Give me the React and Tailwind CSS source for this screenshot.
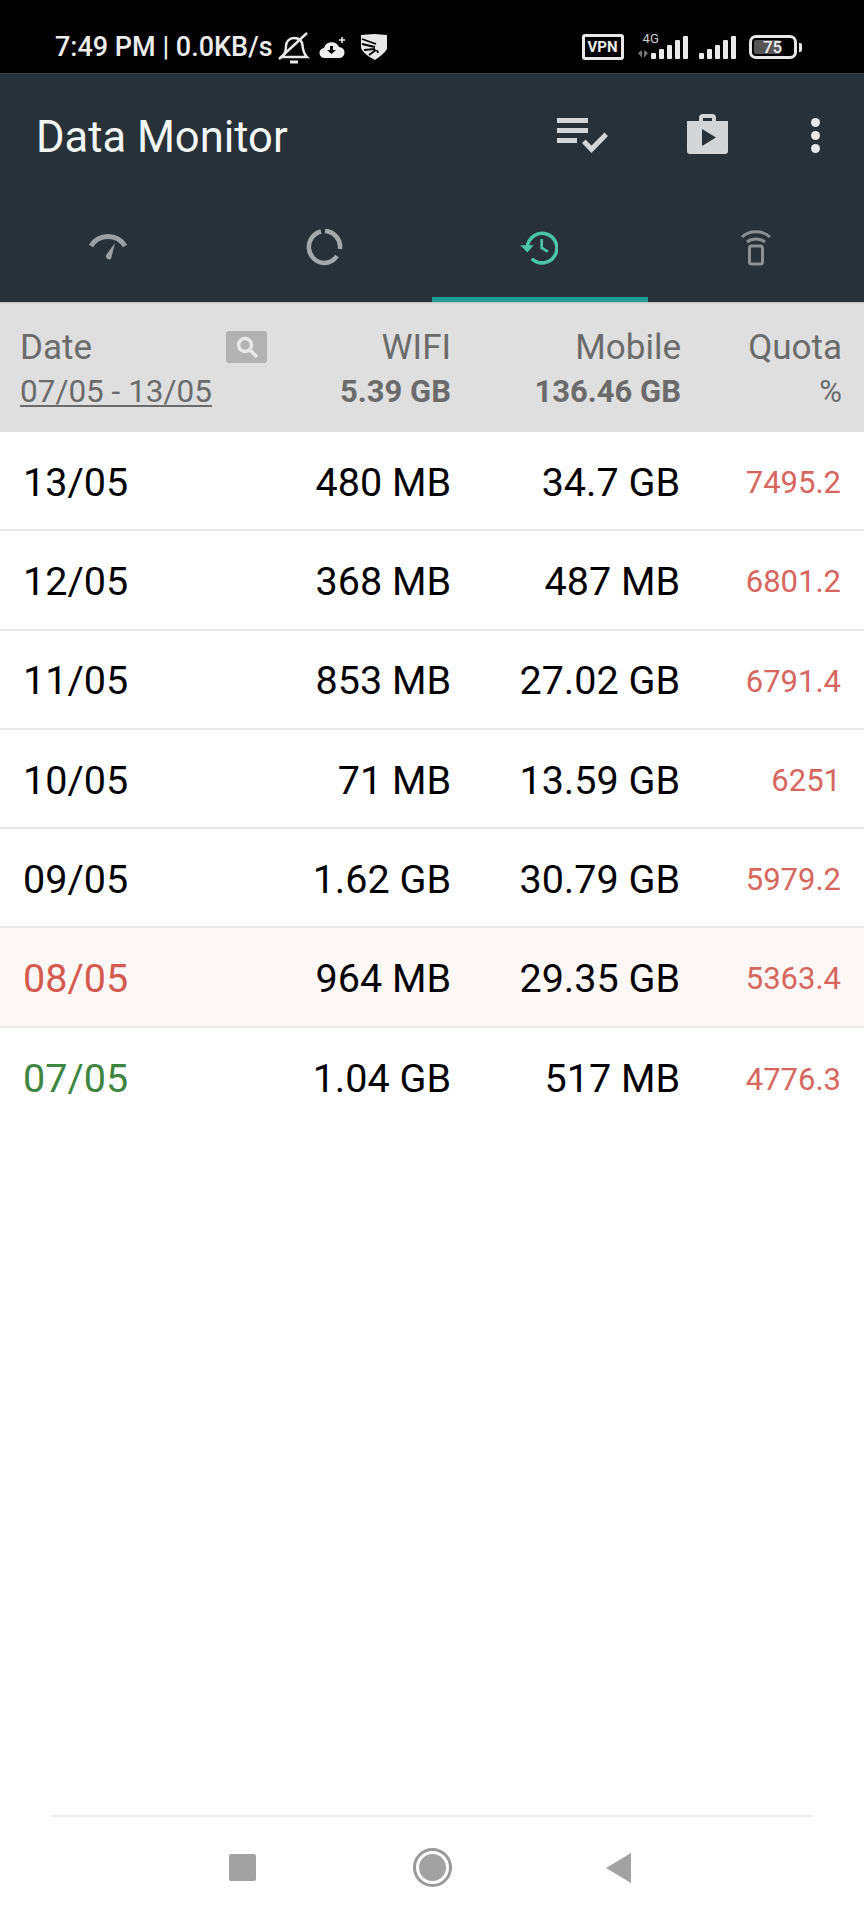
import React from 'react';

const rows = [
  { date: '13/05', wifi: '480 MB', mobile: '34.7 GB', quota: '7495.2', line: true },
  { date: '12/05', wifi: '368 MB', mobile: '487 MB', quota: '6801.2', line: true },
  { date: '11/05', wifi: '853 MB', mobile: '27.02 GB', quota: '6791.4', line: true },
  { date: '10/05', wifi: '71 MB', mobile: '13.59 GB', quota: '6251', line: true },
  { date: '09/05', wifi: '1.62 GB', mobile: '30.79 GB', quota: '5979.2', line: true },
  { date: '08/05', wifi: '964 MB', mobile: '29.35 GB', quota: '5363.4', line: true, rowClass: 'bg-[#fdf7f6]', dateClass: 'text-[#d4594e]' },
  { date: '07/05', wifi: '1.04 GB', mobile: '517 MB', quota: '4776.3', dateClass: 'text-[#3d8540]' },
];

function BellOff() {
  return (
    <svg width="32" height="32" viewBox="0 0 32 32" fill="none" stroke="#e8e8e8" strokeWidth="2.4">
      <path d="M4 25c3-3 4-6 4-11 0-4 3-8 8-8s8 3 8.500 7.500c.5 4.500 1 8 4.500 11.500z" />
      <path d="M12 30h8" strokeWidth="3" />
      <path d="M1 27L29 1" />
    </svg>
  );
}

function CloudDown() {
  return (
    <svg width="28" height="24" viewBox="0 0 28 24">
      <path d="M6 22a5 5 0 0 1-1-10 8 8 0 0 1 15-1 5.500 5.500 0 0 1 0 11z" fill="#eee" />
      <path d="M11 10h3v4h3l-4.500 4L8 14h3z" fill="#000" />
      <path d="M23 1v6M20 4h6" stroke="#eee" strokeWidth="1.500" />
    </svg>
  );
}

function ShieldFan() {
  return (
    <svg width="28" height="28" viewBox="0 0 28 28">
      <path d="M1 2l13-1 13 1v14c-3 5-8 8-12 11C9 24 3 20 1 15z" fill="#e8e8e8" />
      <path d="M2 6l14 5M2 11l13 3M4 17l11-1M9 22l7-5M18 20l-1-3" stroke="#000" strokeWidth="1.800" />
    </svg>
  );
}

function Signal({ width, children }) {
  return (
    <svg width={width} height="26" viewBox={`0 0 ${width} 26`} fill="#eaeaea">
      {children}
    </svg>
  );
}

function StatusBar() {
  return (
    <div className="h-[73px] bg-black flex items-start pl-[55px] text-[#ececec]">
      <span className="mt-[31px] text-[27px] leading-[32px] font-medium">7:49 PM | 0.0KB/s</span>
      <div className="ml-[5px] mt-[32px]"><BellOff /></div>
      <div className="ml-[9px] mt-[36px]"><CloudDown /></div>
      <div className="ml-[13px] mt-[33px]"><ShieldFan /></div>
      <div className="ml-[194px] mt-[34px] w-[42px] h-[26px] border-[3px] border-[#e8e8e8] rounded-[3px] flex items-center justify-center text-[15px] leading-none font-bold">VPN</div>
      <div className="ml-[11px] mt-[33px] relative">
        <span className="absolute left-[8px] top-0 text-[13px] leading-[11px] text-[#cfcfcf]">4G</span>
        <Signal width="54">
          <path d="M3 20l4-3v8zM9 17l4 3-4 5z" fill="#777" />
          <rect x="16" y="20" width="5" height="6" rx="1" />
          <rect x="24" y="16" width="5" height="10" rx="1" />
          <rect x="32" y="12" width="5" height="14" rx="1" />
          <rect x="40" y="7" width="5" height="19" rx="1" />
          <rect x="48" y="3" width="5" height="23" rx="1" />
        </Signal>
      </div>
      <div className="ml-[10px] mt-[33px]">
        <Signal width="38">
          <rect x="0" y="20" width="5" height="6" rx="1" />
          <rect x="8" y="16" width="5" height="10" rx="1" />
          <rect x="16" y="12" width="5" height="14" rx="1" />
          <rect x="24" y="7" width="5" height="19" rx="1" />
          <rect x="32" y="3" width="5" height="23" rx="1" />
        </Signal>
      </div>
      <div className="ml-[12px] mt-[35px] flex items-center">
        <div className="w-[48px] h-[24px] border-[3px] border-[#e8e8e8] rounded-[7px] p-[2px] relative">
          <div className="h-full w-[70%] bg-[#555] rounded-[2px]" />
          <span className="absolute inset-0 flex items-center justify-center text-[17px] leading-none font-medium text-[#eee]">75</span>
        </div>
        <div className="ml-[2px] w-[3px] h-[9px] bg-[#e8e8e8] rounded-r-[2px]" />
      </div>
    </div>
  );
}

function Toolbar() {
  return (
    <div className="h-[122px] flex items-start border-t border-[#36434a]">
      <h1 className="ml-[36px] mt-[40px] w-[252px] whitespace-nowrap text-[43.500px] leading-[48px] font-normal text-[#f3f6f6]">Data Monitor</h1>
      <svg className="ml-[269px] mt-[44px]" width="52" height="38" viewBox="0 0 52 38" fill="#d2d6d8">
        <rect x="0" y="0" width="31" height="5" />
        <rect x="0" y="10" width="31" height="5" />
        <rect x="0" y="20" width="20" height="5" />
        <path d="M25 25l3.500-3.500 6 6L47.500 14.500 51 18 34.500 35z" />
      </svg>
      <svg className="ml-[77px] mt-[39px]" width="43" height="42" viewBox="0 0 43 42" fill="#d2d6d8">
        <path fillRule="evenodd" d="M13 8V5a4 4 0 0 1 4-4h9a4 4 0 0 1 4 4v3h12v30a3 3 0 0 1-3 3H4a3 3 0 0 1-3-3V8zM17 8h9V5h-9zM16 16v17l14-8.500z" />
      </svg>
      <div className="ml-[82px] mt-[44px] flex flex-col gap-[4px]">
        <div className="w-[9px] h-[9px] rounded-full bg-[#e6e8e9]" />
        <div className="w-[9px] h-[9px] rounded-full bg-[#e6e8e9]" />
        <div className="w-[9px] h-[9px] rounded-full bg-[#e6e8e9]" />
      </div>
    </div>
  );
}

function Tabs() {
  return (
    <div className="h-[107px] grid grid-cols-4">
      <div className="flex items-center justify-center pb-[3px]">
        <svg width="40" height="32" viewBox="0 0 40 32" fill="none">
          <path d="M3 15a20 20 0 0 1 34 0" stroke="#9aa0a4" strokeWidth="5" />
          <path d="M27 12l-9 12a3.500 3.500 0 0 0 5 4z" fill="#9aa0a4" />
        </svg>
      </div>
      <div className="flex items-center justify-center pb-[3px]">
        <svg width="38" height="38" viewBox="0 0 38 38" fill="none" stroke="#a3a8ab" strokeWidth="4.500">
          <path d="M16 3.500A16 16 0 0 0 19 35a16 16 0 0 0 13-7" />
          <path d="M20 3a16 16 0 0 1 15 18" />
        </svg>
      </div>
      <div className="flex items-center justify-center pt-[3px] border-b-[5px] border-[#1f9d92]">
        <svg className="-ml-[2px]" width="38" height="34" viewBox="0 0 42 38" fill="none">
          <path d="M8 18a16.500 16.500 0 1 1 5 13" stroke="#4cc5a6" strokeWidth="4" />
          <path d="M0 16h15l-7 8z" fill="#4cc5a6" />
          <path d="M24 9v10l7 4" stroke="#4cc5a6" strokeWidth="3" />
        </svg>
      </div>
      <div className="flex items-center justify-center pb-[3px]">
        <svg width="30" height="38" viewBox="0 0 30 38" fill="none" stroke="#8a9094">
          <path d="M1 9c7-7 21-7 28 0" strokeWidth="3" />
          <path d="M6 14c5-4 13-4 18 0" strokeWidth="3" />
          <rect x="8.500" y="18" width="13" height="18" rx="2" strokeWidth="3" />
        </svg>
      </div>
    </div>
  );
}

function TableHeader() {
  return (
    <div className="h-[130px] bg-[#dfdfdf] pl-[20px] pt-[26px] grid grid-cols-[247px_184px_230px_161px] grid-rows-[38px_50px] items-center text-[#6b6b6b] shadow-[inset_0_3px_2px_-2px_rgba(0,0,0,0.15)]">
      <div className="flex items-center justify-between text-[35px] leading-none">
        <span>Date</span>
        <div className="w-[41px] h-[32px] bg-[#b2b2b2] rounded-[3px] flex items-center justify-center">
          <svg width="24" height="24" viewBox="0 0 24 24" fill="none" stroke="#e8e8e8">
            <circle cx="10" cy="10" r="6.500" strokeWidth="3.500" />
            <path d="M15 15l7 7" strokeWidth="3.500" />
          </svg>
        </div>
      </div>
      <div className="text-right text-[35px] leading-none">WIFI</div>
      <div className="text-right text-[35px] leading-none">Mobile</div>
      <div className="text-right text-[35px] leading-none">Quota</div>
      <div className="pt-[2px] text-[31.500px] leading-none whitespace-nowrap underline underline-offset-[3px] decoration-[2px]">07/05 - 13/05</div>
      <div className="pt-[1px] text-right text-[31px] leading-none font-bold">5.39 GB</div>
      <div className="pt-[1px] text-right text-[31px] leading-none font-bold">136.46 GB</div>
      <div className="pt-[1px] text-right text-[31px] leading-none">%</div>
    </div>
  );
}

function DataRow({ row }) {
  return (
    <div className={`h-[99.250px] pl-[23px] pt-[4px] grid grid-cols-[244px_184px_229px_161px] items-center text-black ${row.line ? 'border-b-2 border-[#e9e9e9]' : ''} ${row.rowClass || ''}`}>
      <div className={`text-[39.500px] leading-none ${row.dateClass || ''}`}>{row.date}</div>
      <div className="text-right text-[39.500px] leading-none">{row.wifi}</div>
      <div className="text-right text-[39.500px] leading-none">{row.mobile}</div>
      <div className="text-right text-[31px] leading-none text-[#d6665e]">{row.quota}</div>
    </div>
  );
}

function NavBar() {
  return (
    <div className="mt-auto h-[105px] bg-white mx-[52px] border-t-2 border-[#eeeeee] flex items-center pb-[2px]">
      <div className="ml-[177px] w-[27px] h-[27px] bg-[#a2a2a2] rounded-[2px]" />
      <div className="ml-[157px] w-[39px] h-[39px] rounded-full border-[3px] border-[#999] flex items-center justify-center">
        <div className="w-[27px] h-[27px] rounded-full bg-[#a2a2a2]" />
      </div>
      <svg className="ml-[154px]" width="25" height="30" viewBox="0 0 25 30" fill="#a2a2a2">
        <path d="M0 15L25 0v30z" />
      </svg>
    </div>
  );
}

export default function App() {
  return (
    <div className="w-[864px] h-[1920px] bg-white flex flex-col font-['Roboto',sans-serif]">
      <StatusBar />
      <div className="bg-[#273137]">
        <Toolbar />
        <Tabs />
      </div>
      <TableHeader />
      {rows.map((row) => (
        <DataRow key={row.date} row={row} />
      ))}
      <NavBar />
    </div>
  );
}
